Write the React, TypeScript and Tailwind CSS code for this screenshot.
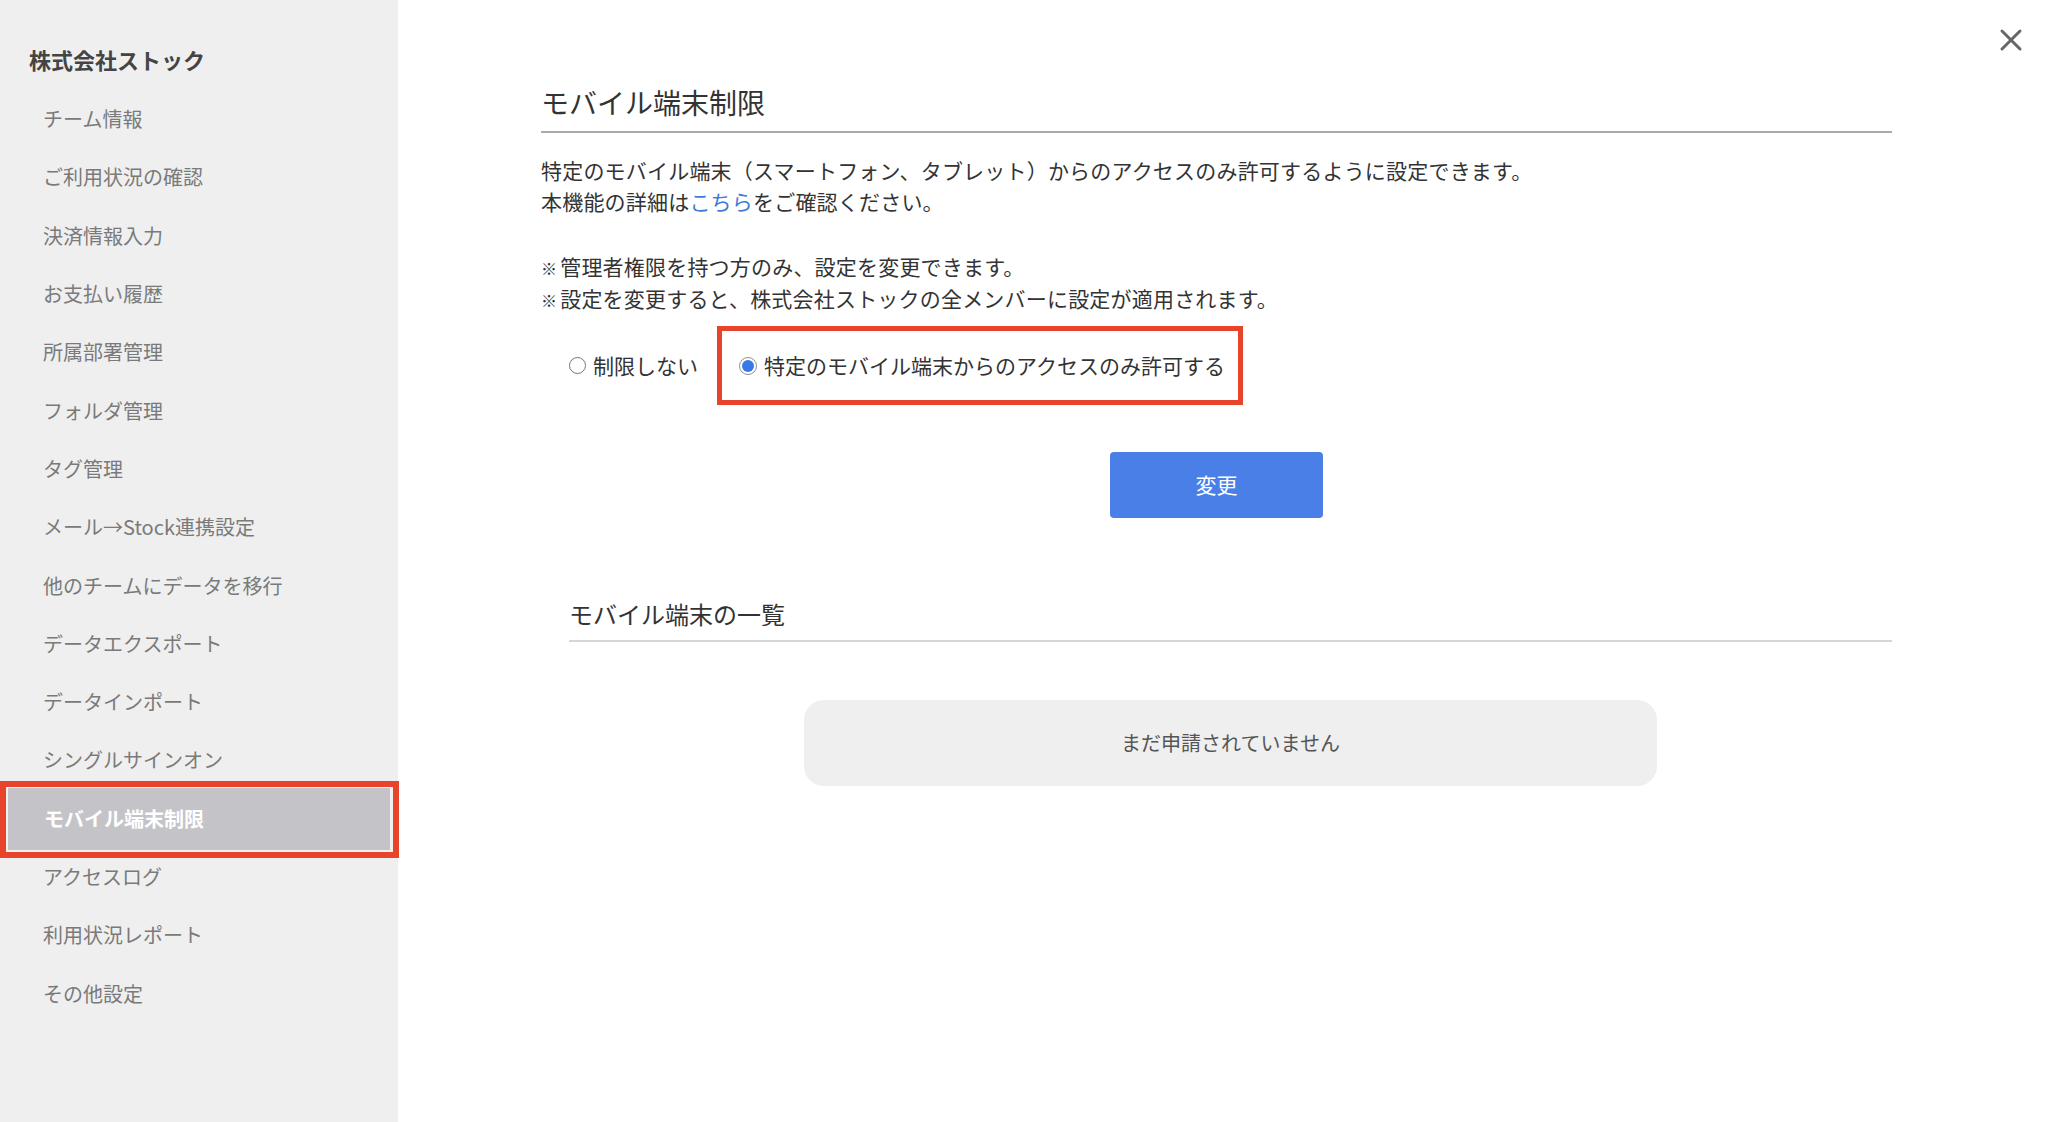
import React from 'react';

const FONT = "font-['Noto_Sans_CJK_JP','Noto_Sans',sans-serif]";

const MENU = [
  'チーム情報',
  'ご利用状況の確認',
  '決済情報入力',
  'お支払い履歴',
  '所属部署管理',
  'フォルダ管理',
  'タグ管理',
  'メール→Stock連携設定',
  '他のチームにデータを移行',
  'データエクスポート',
  'データインポート',
  'シングルサインオン',
  'モバイル端末制限',
  'アクセスログ',
  '利用状況レポート',
  'その他設定',
];

const ACTIVE = 'モバイル端末制限';

function Sidebar() {
  return (
    <aside className="w-[398px] shrink-0 bg-[#efefef] pt-[44px]">
      <div className="pl-[29px] text-[22px] leading-[30px] font-bold text-[#444]">株式会社ストック</div>
      <ul className="mt-[16px]">
        {MENU.map((label) =>
          label === ACTIVE ? (
            <li
              key={label}
              className="relative mx-[7px] -my-[3px] h-[64.3px] flex items-center pl-[36px] bg-[#c4c4c8] border border-[#f2f2f2] text-[20px] font-bold text-white"
            >
              {label}
              {/* annotation frame */}
              <span className="absolute -left-[8px] -right-[9px] -top-[7px] -bottom-[8px] border-[6px] border-[#e8432b] pointer-events-none" />
            </li>
          ) : (
            <li key={label} className="h-[58.3px] flex items-center pl-[43px] text-[20px] text-[#7a7a7a]">
              {label}
            </li>
          )
        )}
      </ul>
    </aside>
  );
}

function Radio({ checked }: { checked?: boolean }) {
  return checked ? (
    <span className="w-[18px] h-[18px] rounded-full border border-[#8f8f8f] bg-white flex items-center justify-center">
      <span className="w-[12px] h-[12px] rounded-full bg-[#3b78e7]" />
    </span>
  ) : (
    <span className="w-[17px] h-[17px] rounded-full border border-[#777] bg-white" />
  );
}

function Note({ children }: { children: React.ReactNode }) {
  return (
    <p className="h-[32px] flex items-center">
      <span className="text-[16px] leading-none mr-[3px] mt-[4px]">※</span>
      <span>{children}</span>
    </p>
  );
}

export default function App() {
  return (
    <div className={`${FONT} flex w-full h-[1122px] bg-white text-[#333]`}>
      <Sidebar />

      <main className="relative flex-1 pt-[85px]">
        {/* close */}
        <button className="absolute top-[28px] right-[25px] w-[24px] h-[24px]" aria-label="close">
          <svg viewBox="0 0 24 24" className="w-[24px] h-[24px]" stroke="#666" strokeWidth="3" strokeLinecap="round">
            <path d="M3 3 L21 21 M21 3 L3 21" />
          </svg>
        </button>

        <div className="ml-[143px] w-[1351px]">
          <h1 className="text-[28px] leading-[34px] pb-[12px] border-b-2 border-[#aaa] font-normal">モバイル端末制限</h1>

          <div className="mt-[22px] text-[21px] leading-[31px] tracking-[0.2px]">
            <p>特定のモバイル端末（スマートフォン、タブレット）からのアクセスのみ許可するように設定できます。</p>
            <p>
              本機能の詳細は<a className="text-[#3b7dd8]">こちら</a>をご確認ください。
            </p>
          </div>

          <div className="mt-[33px] text-[21px] leading-[32px] tracking-[0.2px]">
            <Note>管理者権限を持つ方のみ、設定を変更できます。</Note>
            <Note>設定を変更すると、株式会社ストックの全メンバーに設定が適用されます。</Note>
          </div>

          <div className="mt-[12px] h-[79px] flex items-center pl-[28px] text-[21px]">
            <label className="flex items-center gap-[7px]">
              <Radio />
              <span>制限しない</span>
            </label>
            <div className="ml-[19px] h-full flex items-center border-[5px] border-[#e8432b] pl-[17px] pr-[13px]">
              <label className="flex items-center gap-[7px]">
                <Radio checked />
                <span>特定のモバイル端末からのアクセスのみ許可する</span>
              </label>
            </div>
          </div>

          <div className="mt-[47px] flex justify-center">
            <button className="w-[213px] h-[66px] rounded-[4px] bg-[#4a7fe8] text-white text-[21px]">変更</button>
          </div>

          <section className="ml-[28px] mt-[81px]">
            <h2 className="text-[24px] leading-[30px] pb-[11px] border-b-2 border-[#d6d6d6] font-normal">モバイル端末の一覧</h2>
            <div className="mt-[58px] mx-auto w-[853px] h-[86px] rounded-[20px] bg-[#efefef] flex items-center justify-center text-[20px] text-[#555]">
              まだ申請されていません
            </div>
          </section>
        </div>
      </main>
    </div>
  );
}
